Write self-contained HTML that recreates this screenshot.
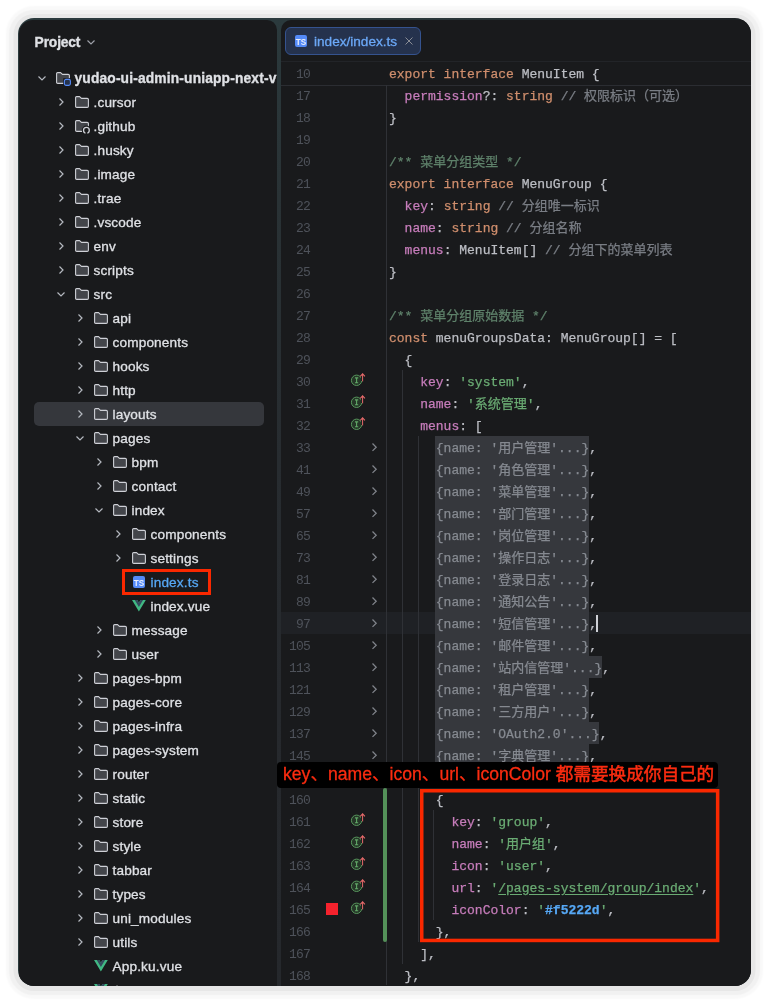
<!DOCTYPE html>
<html><head><meta charset="utf-8"><title>index.ts</title>
<style>
html,body{margin:0;padding:0;background:#fff;}
body{width:769px;height:1004px;position:relative;overflow:hidden;font-family:"Liberation Sans","Noto Sans CJK SC",sans-serif;}
.win{position:absolute;left:18px;top:18px;width:733px;height:968px;border-radius:16px;background:linear-gradient(to right,#2b3a3d 0,#2b3a3d 45%,#1d2124 100%);overflow:hidden;will-change:transform;}
.halo{position:absolute;left:18px;top:18px;width:733px;height:968px;border-radius:16px;box-shadow:0 0.5px 0 4.5px #e7e7e7,0 0.5px 1px 8.5px #f1f1f1,0 0.8px 2px 12px #f9f9f9;}
.side{position:absolute;left:1px;top:2px;width:258px;height:980px;background:#191a1c;border-radius:14px 10px 0 0;overflow:hidden;}
.div{position:absolute;left:259px;top:0;width:4px;height:980px;background:linear-gradient(#2b3a3d 0,#2a373a 60px,#293235 180px,#272c30 440px,#26292d 680px,#25282c 100%);}
.ed{position:absolute;left:263px;top:2px;width:470px;height:980px;background:#191a1c;border-radius:10px 0 0 0;overflow:hidden;}
.row{position:absolute;left:0;height:24px;line-height:24px;font-size:13.6px;letter-spacing:0.16px;color:#dfe1e5;white-space:nowrap;-webkit-text-stroke:0.3px currentColor;}
.row span.t{position:absolute;top:0;}
.sel{position:absolute;left:15px;top:382px;width:229.5px;height:24px;border-radius:5px;background:#35373c;}
svg{position:absolute;overflow:visible;}
.code{position:absolute;left:0;height:22px;line-height:22px;font-family:"Liberation Mono","Noto Sans CJK SC",monospace;font-size:13px;color:#bcbec4;white-space:pre;-webkit-text-stroke:0.25px currentColor;}
.ln{position:absolute;width:60px;text-align:right;left:-30px;height:22px;line-height:22px;font-family:"Liberation Mono",monospace;font-size:13px;letter-spacing:-0.7px;color:#4e525a;}
.k{color:#cf8e6d}.p{color:#c77dbb}.s{color:#6aab73}.c{color:#7a7e85}.d{color:#5f826b}.b{color:#56a8f5}
.f{color:#868a91;}
.fb{position:absolute;height:22px;background:#36383d;}
.u{text-decoration:underline;text-decoration-color:#6aab73;text-underline-offset:2px;}
</style></head><body>
<div class="halo"></div>
<div class="win">

<div class="side">
<div class="row" style="top:10.5px;left:15.6px;font-weight:bold;font-size:13.8px;letter-spacing:-0.15px;"><span class="t" style="left:0">Project</span></div>
<svg style="left:68.2px;top:20.2px" width="8" height="5" viewBox="0 0 8 5"><path d="M0.5 0.5 L4 4 L7.5 0.5" fill="none" stroke="#9da0a8" stroke-width="1.2"/></svg>
<div class="sel"></div>
<svg style="left:19.200000000000003px;top:56.4px" width="8" height="5" viewBox="0 0 8 5"><path d="M0.5 0.5 L4 4 L7.5 0.5" fill="none" stroke="#b4b8bf" stroke-width="1.2"/></svg>
<svg style="left:37px;top:52px" width="14" height="12" viewBox="0 0 14 12"><path d="M1.6 0.6 H4.6 L6.4 2.4 H12.2 Q13.4 2.4 13.4 3.6 V10.2 Q13.4 11.4 12.2 11.4 H1.8 Q0.6 11.4 0.6 10.2 V1.6 Q0.6 0.6 1.6 0.6 Z" fill="#43454a" stroke="#ced0d6" stroke-width="1.1" stroke-linejoin="round"/><rect x="7.2" y="6.2" width="7.6" height="7.6" fill="#191a1c"/><rect x="8.4" y="7.4" width="6" height="6" rx="1.6" fill="#25324d" stroke="#548af7" stroke-width="1.1"/></svg>
<div class="row" style="top:47px;"><span class="t" style="left:55.5px;font-weight:bold;font-size:13.8px;letter-spacing:0.15px;">yudao-ui-admin-uniapp-next-v</span></div>
<svg style="left:39.7px;top:78.4px" width="5" height="8" viewBox="0 0 5 8"><path d="M0.5 0.5 L4 4 L0.5 7.5" fill="none" stroke="#b4b8bf" stroke-width="1.2"/></svg>
<svg style="left:56px;top:76px" width="14" height="12" viewBox="0 0 14 12"><path d="M1.6 0.6 H4.6 L6.4 2.4 H12.2 Q13.4 2.4 13.4 3.6 V10.2 Q13.4 11.4 12.2 11.4 H1.8 Q0.6 11.4 0.6 10.2 V1.6 Q0.6 0.6 1.6 0.6 Z" fill="#43454a" stroke="#ced0d6" stroke-width="1.1" stroke-linejoin="round"/></svg>
<div class="row" style="top:71px;"><span class="t" style="left:74.5px;">.cursor</span></div>
<svg style="left:39.7px;top:102.4px" width="5" height="8" viewBox="0 0 5 8"><path d="M0.5 0.5 L4 4 L0.5 7.5" fill="none" stroke="#b4b8bf" stroke-width="1.2"/></svg>
<svg style="left:56px;top:100px" width="14" height="12" viewBox="0 0 14 12"><path d="M1.6 0.6 H4.6 L6.4 2.4 H12.2 Q13.4 2.4 13.4 3.6 V10.2 Q13.4 11.4 12.2 11.4 H1.8 Q0.6 11.4 0.6 10.2 V1.6 Q0.6 0.6 1.6 0.6 Z" fill="#43454a" stroke="#ced0d6" stroke-width="1.1" stroke-linejoin="round"/><circle cx="11.4" cy="10.2" r="4.6" fill="#191a1c"/><circle cx="11.4" cy="10.2" r="2.9" fill="none" stroke="#ced0d6" stroke-width="1.3"/><rect x="10.5" y="11.6" width="1.8" height="2.6" fill="#191a1c"/></svg>
<div class="row" style="top:95px;"><span class="t" style="left:74.5px;">.github</span></div>
<svg style="left:39.7px;top:126.4px" width="5" height="8" viewBox="0 0 5 8"><path d="M0.5 0.5 L4 4 L0.5 7.5" fill="none" stroke="#b4b8bf" stroke-width="1.2"/></svg>
<svg style="left:56px;top:124px" width="14" height="12" viewBox="0 0 14 12"><path d="M1.6 0.6 H4.6 L6.4 2.4 H12.2 Q13.4 2.4 13.4 3.6 V10.2 Q13.4 11.4 12.2 11.4 H1.8 Q0.6 11.4 0.6 10.2 V1.6 Q0.6 0.6 1.6 0.6 Z" fill="#43454a" stroke="#ced0d6" stroke-width="1.1" stroke-linejoin="round"/></svg>
<div class="row" style="top:119px;"><span class="t" style="left:74.5px;">.husky</span></div>
<svg style="left:39.7px;top:150.4px" width="5" height="8" viewBox="0 0 5 8"><path d="M0.5 0.5 L4 4 L0.5 7.5" fill="none" stroke="#b4b8bf" stroke-width="1.2"/></svg>
<svg style="left:56px;top:148px" width="14" height="12" viewBox="0 0 14 12"><path d="M1.6 0.6 H4.6 L6.4 2.4 H12.2 Q13.4 2.4 13.4 3.6 V10.2 Q13.4 11.4 12.2 11.4 H1.8 Q0.6 11.4 0.6 10.2 V1.6 Q0.6 0.6 1.6 0.6 Z" fill="#43454a" stroke="#ced0d6" stroke-width="1.1" stroke-linejoin="round"/></svg>
<div class="row" style="top:143px;"><span class="t" style="left:74.5px;">.image</span></div>
<svg style="left:39.7px;top:174.4px" width="5" height="8" viewBox="0 0 5 8"><path d="M0.5 0.5 L4 4 L0.5 7.5" fill="none" stroke="#b4b8bf" stroke-width="1.2"/></svg>
<svg style="left:56px;top:172px" width="14" height="12" viewBox="0 0 14 12"><path d="M1.6 0.6 H4.6 L6.4 2.4 H12.2 Q13.4 2.4 13.4 3.6 V10.2 Q13.4 11.4 12.2 11.4 H1.8 Q0.6 11.4 0.6 10.2 V1.6 Q0.6 0.6 1.6 0.6 Z" fill="#43454a" stroke="#ced0d6" stroke-width="1.1" stroke-linejoin="round"/></svg>
<div class="row" style="top:167px;"><span class="t" style="left:74.5px;">.trae</span></div>
<svg style="left:39.7px;top:198.4px" width="5" height="8" viewBox="0 0 5 8"><path d="M0.5 0.5 L4 4 L0.5 7.5" fill="none" stroke="#b4b8bf" stroke-width="1.2"/></svg>
<svg style="left:56px;top:196px" width="14" height="12" viewBox="0 0 14 12"><path d="M1.6 0.6 H4.6 L6.4 2.4 H12.2 Q13.4 2.4 13.4 3.6 V10.2 Q13.4 11.4 12.2 11.4 H1.8 Q0.6 11.4 0.6 10.2 V1.6 Q0.6 0.6 1.6 0.6 Z" fill="#43454a" stroke="#ced0d6" stroke-width="1.1" stroke-linejoin="round"/></svg>
<div class="row" style="top:191px;"><span class="t" style="left:74.5px;">.vscode</span></div>
<svg style="left:39.7px;top:222.4px" width="5" height="8" viewBox="0 0 5 8"><path d="M0.5 0.5 L4 4 L0.5 7.5" fill="none" stroke="#b4b8bf" stroke-width="1.2"/></svg>
<svg style="left:56px;top:220px" width="14" height="12" viewBox="0 0 14 12"><path d="M1.6 0.6 H4.6 L6.4 2.4 H12.2 Q13.4 2.4 13.4 3.6 V10.2 Q13.4 11.4 12.2 11.4 H1.8 Q0.6 11.4 0.6 10.2 V1.6 Q0.6 0.6 1.6 0.6 Z" fill="#43454a" stroke="#ced0d6" stroke-width="1.1" stroke-linejoin="round"/></svg>
<div class="row" style="top:215px;"><span class="t" style="left:74.5px;">env</span></div>
<svg style="left:39.7px;top:246.4px" width="5" height="8" viewBox="0 0 5 8"><path d="M0.5 0.5 L4 4 L0.5 7.5" fill="none" stroke="#b4b8bf" stroke-width="1.2"/></svg>
<svg style="left:56px;top:244px" width="14" height="12" viewBox="0 0 14 12"><path d="M1.6 0.6 H4.6 L6.4 2.4 H12.2 Q13.4 2.4 13.4 3.6 V10.2 Q13.4 11.4 12.2 11.4 H1.8 Q0.6 11.4 0.6 10.2 V1.6 Q0.6 0.6 1.6 0.6 Z" fill="#43454a" stroke="#ced0d6" stroke-width="1.1" stroke-linejoin="round"/></svg>
<div class="row" style="top:239px;"><span class="t" style="left:74.5px;">scripts</span></div>
<svg style="left:38.2px;top:272.4px" width="8" height="5" viewBox="0 0 8 5"><path d="M0.5 0.5 L4 4 L7.5 0.5" fill="none" stroke="#b4b8bf" stroke-width="1.2"/></svg>
<svg style="left:56px;top:268px" width="14" height="12" viewBox="0 0 14 12"><path d="M1.6 0.6 H4.6 L6.4 2.4 H12.2 Q13.4 2.4 13.4 3.6 V10.2 Q13.4 11.4 12.2 11.4 H1.8 Q0.6 11.4 0.6 10.2 V1.6 Q0.6 0.6 1.6 0.6 Z" fill="#43454a" stroke="#ced0d6" stroke-width="1.1" stroke-linejoin="round"/></svg>
<div class="row" style="top:263px;"><span class="t" style="left:74.5px;">src</span></div>
<svg style="left:58.7px;top:294.4px" width="5" height="8" viewBox="0 0 5 8"><path d="M0.5 0.5 L4 4 L0.5 7.5" fill="none" stroke="#b4b8bf" stroke-width="1.2"/></svg>
<svg style="left:75px;top:292px" width="14" height="12" viewBox="0 0 14 12"><path d="M1.6 0.6 H4.6 L6.4 2.4 H12.2 Q13.4 2.4 13.4 3.6 V10.2 Q13.4 11.4 12.2 11.4 H1.8 Q0.6 11.4 0.6 10.2 V1.6 Q0.6 0.6 1.6 0.6 Z" fill="#43454a" stroke="#ced0d6" stroke-width="1.1" stroke-linejoin="round"/></svg>
<div class="row" style="top:287px;"><span class="t" style="left:93.5px;">api</span></div>
<svg style="left:58.7px;top:318.4px" width="5" height="8" viewBox="0 0 5 8"><path d="M0.5 0.5 L4 4 L0.5 7.5" fill="none" stroke="#b4b8bf" stroke-width="1.2"/></svg>
<svg style="left:75px;top:316px" width="14" height="12" viewBox="0 0 14 12"><path d="M1.6 0.6 H4.6 L6.4 2.4 H12.2 Q13.4 2.4 13.4 3.6 V10.2 Q13.4 11.4 12.2 11.4 H1.8 Q0.6 11.4 0.6 10.2 V1.6 Q0.6 0.6 1.6 0.6 Z" fill="#43454a" stroke="#ced0d6" stroke-width="1.1" stroke-linejoin="round"/></svg>
<div class="row" style="top:311px;"><span class="t" style="left:93.5px;">components</span></div>
<svg style="left:58.7px;top:342.4px" width="5" height="8" viewBox="0 0 5 8"><path d="M0.5 0.5 L4 4 L0.5 7.5" fill="none" stroke="#b4b8bf" stroke-width="1.2"/></svg>
<svg style="left:75px;top:340px" width="14" height="12" viewBox="0 0 14 12"><path d="M1.6 0.6 H4.6 L6.4 2.4 H12.2 Q13.4 2.4 13.4 3.6 V10.2 Q13.4 11.4 12.2 11.4 H1.8 Q0.6 11.4 0.6 10.2 V1.6 Q0.6 0.6 1.6 0.6 Z" fill="#43454a" stroke="#ced0d6" stroke-width="1.1" stroke-linejoin="round"/></svg>
<div class="row" style="top:335px;"><span class="t" style="left:93.5px;">hooks</span></div>
<svg style="left:58.7px;top:366.4px" width="5" height="8" viewBox="0 0 5 8"><path d="M0.5 0.5 L4 4 L0.5 7.5" fill="none" stroke="#b4b8bf" stroke-width="1.2"/></svg>
<svg style="left:75px;top:364px" width="14" height="12" viewBox="0 0 14 12"><path d="M1.6 0.6 H4.6 L6.4 2.4 H12.2 Q13.4 2.4 13.4 3.6 V10.2 Q13.4 11.4 12.2 11.4 H1.8 Q0.6 11.4 0.6 10.2 V1.6 Q0.6 0.6 1.6 0.6 Z" fill="#43454a" stroke="#ced0d6" stroke-width="1.1" stroke-linejoin="round"/></svg>
<div class="row" style="top:359px;"><span class="t" style="left:93.5px;">http</span></div>
<svg style="left:58.7px;top:390.4px" width="5" height="8" viewBox="0 0 5 8"><path d="M0.5 0.5 L4 4 L0.5 7.5" fill="none" stroke="#b4b8bf" stroke-width="1.2"/></svg>
<svg style="left:75px;top:388px" width="14" height="12" viewBox="0 0 14 12"><path d="M1.6 0.6 H4.6 L6.4 2.4 H12.2 Q13.4 2.4 13.4 3.6 V10.2 Q13.4 11.4 12.2 11.4 H1.8 Q0.6 11.4 0.6 10.2 V1.6 Q0.6 0.6 1.6 0.6 Z" fill="#43454a" stroke="#ced0d6" stroke-width="1.1" stroke-linejoin="round"/></svg>
<div class="row" style="top:383px;"><span class="t" style="left:93.5px;">layouts</span></div>
<svg style="left:57.2px;top:416.4px" width="8" height="5" viewBox="0 0 8 5"><path d="M0.5 0.5 L4 4 L7.5 0.5" fill="none" stroke="#b4b8bf" stroke-width="1.2"/></svg>
<svg style="left:75px;top:412px" width="14" height="12" viewBox="0 0 14 12"><path d="M1.6 0.6 H4.6 L6.4 2.4 H12.2 Q13.4 2.4 13.4 3.6 V10.2 Q13.4 11.4 12.2 11.4 H1.8 Q0.6 11.4 0.6 10.2 V1.6 Q0.6 0.6 1.6 0.6 Z" fill="#43454a" stroke="#ced0d6" stroke-width="1.1" stroke-linejoin="round"/></svg>
<div class="row" style="top:407px;"><span class="t" style="left:93.5px;">pages</span></div>
<svg style="left:77.7px;top:438.4px" width="5" height="8" viewBox="0 0 5 8"><path d="M0.5 0.5 L4 4 L0.5 7.5" fill="none" stroke="#b4b8bf" stroke-width="1.2"/></svg>
<svg style="left:94px;top:436px" width="14" height="12" viewBox="0 0 14 12"><path d="M1.6 0.6 H4.6 L6.4 2.4 H12.2 Q13.4 2.4 13.4 3.6 V10.2 Q13.4 11.4 12.2 11.4 H1.8 Q0.6 11.4 0.6 10.2 V1.6 Q0.6 0.6 1.6 0.6 Z" fill="#43454a" stroke="#ced0d6" stroke-width="1.1" stroke-linejoin="round"/></svg>
<div class="row" style="top:431px;"><span class="t" style="left:112.5px;">bpm</span></div>
<svg style="left:77.7px;top:462.4px" width="5" height="8" viewBox="0 0 5 8"><path d="M0.5 0.5 L4 4 L0.5 7.5" fill="none" stroke="#b4b8bf" stroke-width="1.2"/></svg>
<svg style="left:94px;top:460px" width="14" height="12" viewBox="0 0 14 12"><path d="M1.6 0.6 H4.6 L6.4 2.4 H12.2 Q13.4 2.4 13.4 3.6 V10.2 Q13.4 11.4 12.2 11.4 H1.8 Q0.6 11.4 0.6 10.2 V1.6 Q0.6 0.6 1.6 0.6 Z" fill="#43454a" stroke="#ced0d6" stroke-width="1.1" stroke-linejoin="round"/></svg>
<div class="row" style="top:455px;"><span class="t" style="left:112.5px;">contact</span></div>
<svg style="left:76.2px;top:488.4px" width="8" height="5" viewBox="0 0 8 5"><path d="M0.5 0.5 L4 4 L7.5 0.5" fill="none" stroke="#b4b8bf" stroke-width="1.2"/></svg>
<svg style="left:94px;top:484px" width="14" height="12" viewBox="0 0 14 12"><path d="M1.6 0.6 H4.6 L6.4 2.4 H12.2 Q13.4 2.4 13.4 3.6 V10.2 Q13.4 11.4 12.2 11.4 H1.8 Q0.6 11.4 0.6 10.2 V1.6 Q0.6 0.6 1.6 0.6 Z" fill="#43454a" stroke="#ced0d6" stroke-width="1.1" stroke-linejoin="round"/></svg>
<div class="row" style="top:479px;"><span class="t" style="left:112.5px;">index</span></div>
<svg style="left:96.7px;top:510.4px" width="5" height="8" viewBox="0 0 5 8"><path d="M0.5 0.5 L4 4 L0.5 7.5" fill="none" stroke="#b4b8bf" stroke-width="1.2"/></svg>
<svg style="left:113px;top:508px" width="14" height="12" viewBox="0 0 14 12"><path d="M1.6 0.6 H4.6 L6.4 2.4 H12.2 Q13.4 2.4 13.4 3.6 V10.2 Q13.4 11.4 12.2 11.4 H1.8 Q0.6 11.4 0.6 10.2 V1.6 Q0.6 0.6 1.6 0.6 Z" fill="#43454a" stroke="#ced0d6" stroke-width="1.1" stroke-linejoin="round"/></svg>
<div class="row" style="top:503px;"><span class="t" style="left:131.5px;">components</span></div>
<svg style="left:96.7px;top:534.4px" width="5" height="8" viewBox="0 0 5 8"><path d="M0.5 0.5 L4 4 L0.5 7.5" fill="none" stroke="#b4b8bf" stroke-width="1.2"/></svg>
<svg style="left:113px;top:532px" width="14" height="12" viewBox="0 0 14 12"><path d="M1.6 0.6 H4.6 L6.4 2.4 H12.2 Q13.4 2.4 13.4 3.6 V10.2 Q13.4 11.4 12.2 11.4 H1.8 Q0.6 11.4 0.6 10.2 V1.6 Q0.6 0.6 1.6 0.6 Z" fill="#43454a" stroke="#ced0d6" stroke-width="1.1" stroke-linejoin="round"/></svg>
<div class="row" style="top:527px;"><span class="t" style="left:131.5px;">settings</span></div>
<svg style="left:114px;top:556px" width="12" height="12" viewBox="0 0 12 12"><rect width="12" height="12" rx="2" fill="#548af7"/><text x="6" y="9.5" font-family="Liberation Sans,sans-serif" font-size="8.2" font-weight="bold" fill="#e8eefc" text-anchor="middle">TS</text></svg>
<div class="row" style="top:551px;"><span class="t" style="left:131.5px;color:#56a8f5;">index.ts</span></div>
<svg style="left:113.3px;top:580px" width="13.8" height="11.6" viewBox="0 0 13.8 11.95" preserveAspectRatio="none"><path d="M8.49 0 L6.9 2.76 L5.3 0 H0 L6.9 11.95 L13.8 0 Z" fill="#41b883"/><path d="M8.49 0 L6.9 2.76 L5.3 0 H2.76 L6.9 7.17 L11.04 0 Z" fill="#35495e"/></svg>
<div class="row" style="top:575px;"><span class="t" style="left:131.5px;">index.vue</span></div>
<svg style="left:77.7px;top:606.4px" width="5" height="8" viewBox="0 0 5 8"><path d="M0.5 0.5 L4 4 L0.5 7.5" fill="none" stroke="#b4b8bf" stroke-width="1.2"/></svg>
<svg style="left:94px;top:604px" width="14" height="12" viewBox="0 0 14 12"><path d="M1.6 0.6 H4.6 L6.4 2.4 H12.2 Q13.4 2.4 13.4 3.6 V10.2 Q13.4 11.4 12.2 11.4 H1.8 Q0.6 11.4 0.6 10.2 V1.6 Q0.6 0.6 1.6 0.6 Z" fill="#43454a" stroke="#ced0d6" stroke-width="1.1" stroke-linejoin="round"/></svg>
<div class="row" style="top:599px;"><span class="t" style="left:112.5px;">message</span></div>
<svg style="left:77.7px;top:630.4px" width="5" height="8" viewBox="0 0 5 8"><path d="M0.5 0.5 L4 4 L0.5 7.5" fill="none" stroke="#b4b8bf" stroke-width="1.2"/></svg>
<svg style="left:94px;top:628px" width="14" height="12" viewBox="0 0 14 12"><path d="M1.6 0.6 H4.6 L6.4 2.4 H12.2 Q13.4 2.4 13.4 3.6 V10.2 Q13.4 11.4 12.2 11.4 H1.8 Q0.6 11.4 0.6 10.2 V1.6 Q0.6 0.6 1.6 0.6 Z" fill="#43454a" stroke="#ced0d6" stroke-width="1.1" stroke-linejoin="round"/></svg>
<div class="row" style="top:623px;"><span class="t" style="left:112.5px;">user</span></div>
<svg style="left:58.7px;top:654.4px" width="5" height="8" viewBox="0 0 5 8"><path d="M0.5 0.5 L4 4 L0.5 7.5" fill="none" stroke="#b4b8bf" stroke-width="1.2"/></svg>
<svg style="left:75px;top:652px" width="14" height="12" viewBox="0 0 14 12"><path d="M1.6 0.6 H4.6 L6.4 2.4 H12.2 Q13.4 2.4 13.4 3.6 V10.2 Q13.4 11.4 12.2 11.4 H1.8 Q0.6 11.4 0.6 10.2 V1.6 Q0.6 0.6 1.6 0.6 Z" fill="#43454a" stroke="#ced0d6" stroke-width="1.1" stroke-linejoin="round"/></svg>
<div class="row" style="top:647px;"><span class="t" style="left:93.5px;">pages-bpm</span></div>
<svg style="left:58.7px;top:678.4px" width="5" height="8" viewBox="0 0 5 8"><path d="M0.5 0.5 L4 4 L0.5 7.5" fill="none" stroke="#b4b8bf" stroke-width="1.2"/></svg>
<svg style="left:75px;top:676px" width="14" height="12" viewBox="0 0 14 12"><path d="M1.6 0.6 H4.6 L6.4 2.4 H12.2 Q13.4 2.4 13.4 3.6 V10.2 Q13.4 11.4 12.2 11.4 H1.8 Q0.6 11.4 0.6 10.2 V1.6 Q0.6 0.6 1.6 0.6 Z" fill="#43454a" stroke="#ced0d6" stroke-width="1.1" stroke-linejoin="round"/></svg>
<div class="row" style="top:671px;"><span class="t" style="left:93.5px;">pages-core</span></div>
<svg style="left:58.7px;top:702.4px" width="5" height="8" viewBox="0 0 5 8"><path d="M0.5 0.5 L4 4 L0.5 7.5" fill="none" stroke="#b4b8bf" stroke-width="1.2"/></svg>
<svg style="left:75px;top:700px" width="14" height="12" viewBox="0 0 14 12"><path d="M1.6 0.6 H4.6 L6.4 2.4 H12.2 Q13.4 2.4 13.4 3.6 V10.2 Q13.4 11.4 12.2 11.4 H1.8 Q0.6 11.4 0.6 10.2 V1.6 Q0.6 0.6 1.6 0.6 Z" fill="#43454a" stroke="#ced0d6" stroke-width="1.1" stroke-linejoin="round"/></svg>
<div class="row" style="top:695px;"><span class="t" style="left:93.5px;">pages-infra</span></div>
<svg style="left:58.7px;top:726.4px" width="5" height="8" viewBox="0 0 5 8"><path d="M0.5 0.5 L4 4 L0.5 7.5" fill="none" stroke="#b4b8bf" stroke-width="1.2"/></svg>
<svg style="left:75px;top:724px" width="14" height="12" viewBox="0 0 14 12"><path d="M1.6 0.6 H4.6 L6.4 2.4 H12.2 Q13.4 2.4 13.4 3.6 V10.2 Q13.4 11.4 12.2 11.4 H1.8 Q0.6 11.4 0.6 10.2 V1.6 Q0.6 0.6 1.6 0.6 Z" fill="#43454a" stroke="#ced0d6" stroke-width="1.1" stroke-linejoin="round"/></svg>
<div class="row" style="top:719px;"><span class="t" style="left:93.5px;">pages-system</span></div>
<svg style="left:58.7px;top:750.4px" width="5" height="8" viewBox="0 0 5 8"><path d="M0.5 0.5 L4 4 L0.5 7.5" fill="none" stroke="#b4b8bf" stroke-width="1.2"/></svg>
<svg style="left:75px;top:748px" width="14" height="12" viewBox="0 0 14 12"><path d="M1.6 0.6 H4.6 L6.4 2.4 H12.2 Q13.4 2.4 13.4 3.6 V10.2 Q13.4 11.4 12.2 11.4 H1.8 Q0.6 11.4 0.6 10.2 V1.6 Q0.6 0.6 1.6 0.6 Z" fill="#43454a" stroke="#ced0d6" stroke-width="1.1" stroke-linejoin="round"/></svg>
<div class="row" style="top:743px;"><span class="t" style="left:93.5px;">router</span></div>
<svg style="left:58.7px;top:774.4px" width="5" height="8" viewBox="0 0 5 8"><path d="M0.5 0.5 L4 4 L0.5 7.5" fill="none" stroke="#b4b8bf" stroke-width="1.2"/></svg>
<svg style="left:75px;top:772px" width="14" height="12" viewBox="0 0 14 12"><path d="M1.6 0.6 H4.6 L6.4 2.4 H12.2 Q13.4 2.4 13.4 3.6 V10.2 Q13.4 11.4 12.2 11.4 H1.8 Q0.6 11.4 0.6 10.2 V1.6 Q0.6 0.6 1.6 0.6 Z" fill="#43454a" stroke="#ced0d6" stroke-width="1.1" stroke-linejoin="round"/></svg>
<div class="row" style="top:767px;"><span class="t" style="left:93.5px;">static</span></div>
<svg style="left:58.7px;top:798.4px" width="5" height="8" viewBox="0 0 5 8"><path d="M0.5 0.5 L4 4 L0.5 7.5" fill="none" stroke="#b4b8bf" stroke-width="1.2"/></svg>
<svg style="left:75px;top:796px" width="14" height="12" viewBox="0 0 14 12"><path d="M1.6 0.6 H4.6 L6.4 2.4 H12.2 Q13.4 2.4 13.4 3.6 V10.2 Q13.4 11.4 12.2 11.4 H1.8 Q0.6 11.4 0.6 10.2 V1.6 Q0.6 0.6 1.6 0.6 Z" fill="#43454a" stroke="#ced0d6" stroke-width="1.1" stroke-linejoin="round"/></svg>
<div class="row" style="top:791px;"><span class="t" style="left:93.5px;">store</span></div>
<svg style="left:58.7px;top:822.4px" width="5" height="8" viewBox="0 0 5 8"><path d="M0.5 0.5 L4 4 L0.5 7.5" fill="none" stroke="#b4b8bf" stroke-width="1.2"/></svg>
<svg style="left:75px;top:820px" width="14" height="12" viewBox="0 0 14 12"><path d="M1.6 0.6 H4.6 L6.4 2.4 H12.2 Q13.4 2.4 13.4 3.6 V10.2 Q13.4 11.4 12.2 11.4 H1.8 Q0.6 11.4 0.6 10.2 V1.6 Q0.6 0.6 1.6 0.6 Z" fill="#43454a" stroke="#ced0d6" stroke-width="1.1" stroke-linejoin="round"/></svg>
<div class="row" style="top:815px;"><span class="t" style="left:93.5px;">style</span></div>
<svg style="left:58.7px;top:846.4px" width="5" height="8" viewBox="0 0 5 8"><path d="M0.5 0.5 L4 4 L0.5 7.5" fill="none" stroke="#b4b8bf" stroke-width="1.2"/></svg>
<svg style="left:75px;top:844px" width="14" height="12" viewBox="0 0 14 12"><path d="M1.6 0.6 H4.6 L6.4 2.4 H12.2 Q13.4 2.4 13.4 3.6 V10.2 Q13.4 11.4 12.2 11.4 H1.8 Q0.6 11.4 0.6 10.2 V1.6 Q0.6 0.6 1.6 0.6 Z" fill="#43454a" stroke="#ced0d6" stroke-width="1.1" stroke-linejoin="round"/></svg>
<div class="row" style="top:839px;"><span class="t" style="left:93.5px;">tabbar</span></div>
<svg style="left:58.7px;top:870.4px" width="5" height="8" viewBox="0 0 5 8"><path d="M0.5 0.5 L4 4 L0.5 7.5" fill="none" stroke="#b4b8bf" stroke-width="1.2"/></svg>
<svg style="left:75px;top:868px" width="14" height="12" viewBox="0 0 14 12"><path d="M1.6 0.6 H4.6 L6.4 2.4 H12.2 Q13.4 2.4 13.4 3.6 V10.2 Q13.4 11.4 12.2 11.4 H1.8 Q0.6 11.4 0.6 10.2 V1.6 Q0.6 0.6 1.6 0.6 Z" fill="#43454a" stroke="#ced0d6" stroke-width="1.1" stroke-linejoin="round"/></svg>
<div class="row" style="top:863px;"><span class="t" style="left:93.5px;">types</span></div>
<svg style="left:58.7px;top:894.4px" width="5" height="8" viewBox="0 0 5 8"><path d="M0.5 0.5 L4 4 L0.5 7.5" fill="none" stroke="#b4b8bf" stroke-width="1.2"/></svg>
<svg style="left:75px;top:892px" width="14" height="12" viewBox="0 0 14 12"><path d="M1.6 0.6 H4.6 L6.4 2.4 H12.2 Q13.4 2.4 13.4 3.6 V10.2 Q13.4 11.4 12.2 11.4 H1.8 Q0.6 11.4 0.6 10.2 V1.6 Q0.6 0.6 1.6 0.6 Z" fill="#43454a" stroke="#ced0d6" stroke-width="1.1" stroke-linejoin="round"/></svg>
<div class="row" style="top:887px;"><span class="t" style="left:93.5px;">uni_modules</span></div>
<svg style="left:58.7px;top:918.4px" width="5" height="8" viewBox="0 0 5 8"><path d="M0.5 0.5 L4 4 L0.5 7.5" fill="none" stroke="#b4b8bf" stroke-width="1.2"/></svg>
<svg style="left:75px;top:916px" width="14" height="12" viewBox="0 0 14 12"><path d="M1.6 0.6 H4.6 L6.4 2.4 H12.2 Q13.4 2.4 13.4 3.6 V10.2 Q13.4 11.4 12.2 11.4 H1.8 Q0.6 11.4 0.6 10.2 V1.6 Q0.6 0.6 1.6 0.6 Z" fill="#43454a" stroke="#ced0d6" stroke-width="1.1" stroke-linejoin="round"/></svg>
<div class="row" style="top:911px;"><span class="t" style="left:93.5px;">utils</span></div>
<svg style="left:75.3px;top:940px" width="13.8" height="11.6" viewBox="0 0 13.8 11.95" preserveAspectRatio="none"><path d="M8.49 0 L6.9 2.76 L5.3 0 H0 L6.9 11.95 L13.8 0 Z" fill="#41b883"/><path d="M8.49 0 L6.9 2.76 L5.3 0 H2.76 L6.9 7.17 L11.04 0 Z" fill="#35495e"/></svg>
<div class="row" style="top:935px;"><span class="t" style="left:93.5px;">App.ku.vue</span></div>
<svg style="left:75.3px;top:964px" width="13.8" height="11.6" viewBox="0 0 13.8 11.95" preserveAspectRatio="none"><path d="M8.49 0 L6.9 2.76 L5.3 0 H0 L6.9 11.95 L13.8 0 Z" fill="#41b883"/><path d="M8.49 0 L6.9 2.76 L5.3 0 H2.76 L6.9 7.17 L11.04 0 Z" fill="#35495e"/></svg>
<div class="row" style="top:959px;"><span class="t" style="left:93.5px;">App.vue</span></div>
<div style="position:absolute;left:103px;top:548.7px;width:82.69999999999999px;height:20.299999999999955px;border:3px solid #fa2800;"></div>
</div>
<div class="div"></div>
<div class="ed">
<div style="position:absolute;left:4px;top:7px;width:134px;height:26px;border:1px solid #35538f;border-radius:6px;background:#25324d;"></div>
<svg style="left:14px;top:15px" width="12" height="12" viewBox="0 0 12 12"><rect width="12" height="12" rx="2" fill="#548af7"/><text x="6" y="9.5" font-family="Liberation Sans,sans-serif" font-size="8.2" font-weight="bold" fill="#e8eefc" text-anchor="middle">TS</text></svg>
<div style="position:absolute;left:33px;top:10px;height:24px;line-height:24px;font-size:13.6px;letter-spacing:0;color:#6ba8f7;white-space:nowrap;-webkit-text-stroke:0.3px #6ba8f7;">index/index.ts</div>
<svg style="left:123.5px;top:17px" width="8" height="8" viewBox="0 0 8 8"><path d="M0.5 0.5 L7.5 7.5 M7.5 0.5 L0.5 7.5" stroke="#8a8d95" stroke-width="1" fill="none"/></svg>
<div style="position:absolute;left:0;top:40.5px;width:470px;height:1px;background:#222428;"></div>
<div style="position:absolute;left:0;top:64.6px;width:470px;height:1px;background:#2b2d32;"></div>
<div style="position:absolute;left:0;top:592px;width:470px;height:22px;background:#1f2125;"></div>
<div style="position:absolute;left:105px;top:65px;width:1px;height:900px;background:#2f3136;"></div>
<div style="position:absolute;left:121px;top:350px;width:1px;height:594px;background:#2f3136;"></div>
<div style="position:absolute;left:137px;top:416px;width:1px;height:506px;background:#2f3136;"></div>
<div style="position:absolute;left:152px;top:790px;width:1px;height:110px;background:#2f3136;"></div>
<div style="position:absolute;left:102px;top:768px;width:3.7px;height:154px;background:#549159;border-radius:2px;"></div>
<div class="ln" style="top:44.0px;left:-30.80000000000001px">10</div>
<div class="code" style="top:43.5px;left:108px"><span class="k">export interface</span> MenuItem {</div>
<div class="ln" style="top:66.0px;left:-30.80000000000001px">17</div>
<div class="code" style="top:65.5px;left:108px">  <span class="p">permission</span>?: <span class="k">string</span> <span class="c">// 权限标识（可选）</span></div>
<div class="ln" style="top:88.0px;left:-30.80000000000001px">18</div>
<div class="code" style="top:87.5px;left:108px">}</div>
<div class="ln" style="top:110.0px;left:-30.80000000000001px">19</div>
<div class="code" style="top:109.5px;left:108px"></div>
<div class="ln" style="top:132.0px;left:-30.80000000000001px">20</div>
<div class="code" style="top:131.5px;left:108px"><span class="d">/** 菜单分组类型 */</span></div>
<div class="ln" style="top:154.0px;left:-30.80000000000001px">21</div>
<div class="code" style="top:153.5px;left:108px"><span class="k">export interface</span> MenuGroup {</div>
<div class="ln" style="top:176.0px;left:-30.80000000000001px">22</div>
<div class="code" style="top:175.5px;left:108px">  <span class="p">key</span>: <span class="k">string</span> <span class="c">// 分组唯一标识</span></div>
<div class="ln" style="top:198.0px;left:-30.80000000000001px">23</div>
<div class="code" style="top:197.5px;left:108px">  <span class="p">name</span>: <span class="k">string</span> <span class="c">// 分组名称</span></div>
<div class="ln" style="top:220.0px;left:-30.80000000000001px">24</div>
<div class="code" style="top:219.5px;left:108px">  <span class="p">menus</span>: MenuItem[] <span class="c">// 分组下的菜单列表</span></div>
<div class="ln" style="top:242.0px;left:-30.80000000000001px">25</div>
<div class="code" style="top:241.5px;left:108px">}</div>
<div class="ln" style="top:264.0px;left:-30.80000000000001px">26</div>
<div class="code" style="top:263.5px;left:108px"></div>
<div class="ln" style="top:286.0px;left:-30.80000000000001px">27</div>
<div class="code" style="top:285.5px;left:108px"><span class="d">/** 菜单分组原始数据 */</span></div>
<div class="ln" style="top:308.0px;left:-30.80000000000001px">28</div>
<div class="code" style="top:307.5px;left:108px"><span class="k">const</span> menuGroupsData: MenuGroup[] = [</div>
<div class="ln" style="top:330.0px;left:-30.80000000000001px">29</div>
<div class="code" style="top:329.5px;left:108px">  {</div>
<div class="ln" style="top:352.0px;left:-30.80000000000001px">30</div>
<svg style="left:69.89999999999998px;top:352.4px" width="16" height="15" viewBox="0 0 16 15"><circle cx="5.6" cy="8.3" r="5.2" fill="#253627" stroke="#57965c" stroke-width="1"/><path d="M4 5.9 H7.2 M4 10.7 H7.2 M5.6 5.9 V10.7" stroke="#62a868" stroke-width="1.1" fill="none"/><rect x="10.1" y="0" width="3" height="9" fill="#191a1c"/><path d="M11.6 9.4 V1.9" stroke="#e66a6a" stroke-width="1" fill="none"/><path d="M9.3 4.4 L11.6 1.8 L13.9 4.4" stroke="#e66a6a" stroke-width="1.1" fill="none"/></svg>
<div class="code" style="top:351.5px;left:108px">    <span class="p">key</span>: <span class="s">&#x27;system&#x27;</span>,</div>
<div class="ln" style="top:374.0px;left:-30.80000000000001px">31</div>
<svg style="left:69.89999999999998px;top:374.4px" width="16" height="15" viewBox="0 0 16 15"><circle cx="5.6" cy="8.3" r="5.2" fill="#253627" stroke="#57965c" stroke-width="1"/><path d="M4 5.9 H7.2 M4 10.7 H7.2 M5.6 5.9 V10.7" stroke="#62a868" stroke-width="1.1" fill="none"/><rect x="10.1" y="0" width="3" height="9" fill="#191a1c"/><path d="M11.6 9.4 V1.9" stroke="#e66a6a" stroke-width="1" fill="none"/><path d="M9.3 4.4 L11.6 1.8 L13.9 4.4" stroke="#e66a6a" stroke-width="1.1" fill="none"/></svg>
<div class="code" style="top:373.5px;left:108px">    <span class="p">name</span>: <span class="s">&#x27;系统管理&#x27;</span>,</div>
<div class="ln" style="top:396.0px;left:-30.80000000000001px">32</div>
<svg style="left:69.89999999999998px;top:396.4px" width="16" height="15" viewBox="0 0 16 15"><circle cx="5.6" cy="8.3" r="5.2" fill="#253627" stroke="#57965c" stroke-width="1"/><path d="M4 5.9 H7.2 M4 10.7 H7.2 M5.6 5.9 V10.7" stroke="#62a868" stroke-width="1.1" fill="none"/><rect x="10.1" y="0" width="3" height="9" fill="#191a1c"/><path d="M11.6 9.4 V1.9" stroke="#e66a6a" stroke-width="1" fill="none"/><path d="M9.3 4.4 L11.6 1.8 L13.9 4.4" stroke="#e66a6a" stroke-width="1.1" fill="none"/></svg>
<div class="code" style="top:395.5px;left:108px">    <span class="p">menus</span>: [</div>
<div class="ln" style="top:418.0px;left:-30.80000000000001px">33</div>
<svg style="left:90.60000000000002px;top:423.3px" width="5" height="8.4" viewBox="0 0 5 8.4"><path d="M0.5 0.5 L4.2 4.2 L0.5 7.9" fill="none" stroke="#80848b" stroke-width="1.25"/></svg>
<div class="fb" style="left:154.3px;top:416px;width:153.6px"></div>
<div class="code" style="top:417.5px;left:108px">      <span class="f">{name: &#x27;用户管理&#x27;...}</span>,</div>
<div class="ln" style="top:440.0px;left:-30.80000000000001px">41</div>
<svg style="left:90.60000000000002px;top:445.3px" width="5" height="8.4" viewBox="0 0 5 8.4"><path d="M0.5 0.5 L4.2 4.2 L0.5 7.9" fill="none" stroke="#80848b" stroke-width="1.25"/></svg>
<div class="fb" style="left:154.3px;top:438px;width:153.6px"></div>
<div class="code" style="top:439.5px;left:108px">      <span class="f">{name: &#x27;角色管理&#x27;...}</span>,</div>
<div class="ln" style="top:462.0px;left:-30.80000000000001px">49</div>
<svg style="left:90.60000000000002px;top:467.3px" width="5" height="8.4" viewBox="0 0 5 8.4"><path d="M0.5 0.5 L4.2 4.2 L0.5 7.9" fill="none" stroke="#80848b" stroke-width="1.25"/></svg>
<div class="fb" style="left:154.3px;top:460px;width:153.6px"></div>
<div class="code" style="top:461.5px;left:108px">      <span class="f">{name: &#x27;菜单管理&#x27;...}</span>,</div>
<div class="ln" style="top:484.0px;left:-30.80000000000001px">57</div>
<svg style="left:90.60000000000002px;top:489.3px" width="5" height="8.4" viewBox="0 0 5 8.4"><path d="M0.5 0.5 L4.2 4.2 L0.5 7.9" fill="none" stroke="#80848b" stroke-width="1.25"/></svg>
<div class="fb" style="left:154.3px;top:482px;width:153.6px"></div>
<div class="code" style="top:483.5px;left:108px">      <span class="f">{name: &#x27;部门管理&#x27;...}</span>,</div>
<div class="ln" style="top:506.0px;left:-30.80000000000001px">65</div>
<svg style="left:90.60000000000002px;top:511.3px" width="5" height="8.4" viewBox="0 0 5 8.4"><path d="M0.5 0.5 L4.2 4.2 L0.5 7.9" fill="none" stroke="#80848b" stroke-width="1.25"/></svg>
<div class="fb" style="left:154.3px;top:504px;width:153.6px"></div>
<div class="code" style="top:505.5px;left:108px">      <span class="f">{name: &#x27;岗位管理&#x27;...}</span>,</div>
<div class="ln" style="top:528.0px;left:-30.80000000000001px">73</div>
<svg style="left:90.60000000000002px;top:533.3px" width="5" height="8.4" viewBox="0 0 5 8.4"><path d="M0.5 0.5 L4.2 4.2 L0.5 7.9" fill="none" stroke="#80848b" stroke-width="1.25"/></svg>
<div class="fb" style="left:154.3px;top:526px;width:153.6px"></div>
<div class="code" style="top:527.5px;left:108px">      <span class="f">{name: &#x27;操作日志&#x27;...}</span>,</div>
<div class="ln" style="top:550.0px;left:-30.80000000000001px">81</div>
<svg style="left:90.60000000000002px;top:555.3px" width="5" height="8.4" viewBox="0 0 5 8.4"><path d="M0.5 0.5 L4.2 4.2 L0.5 7.9" fill="none" stroke="#80848b" stroke-width="1.25"/></svg>
<div class="fb" style="left:154.3px;top:548px;width:153.6px"></div>
<div class="code" style="top:549.5px;left:108px">      <span class="f">{name: &#x27;登录日志&#x27;...}</span>,</div>
<div class="ln" style="top:572.0px;left:-30.80000000000001px">89</div>
<svg style="left:90.60000000000002px;top:577.3px" width="5" height="8.4" viewBox="0 0 5 8.4"><path d="M0.5 0.5 L4.2 4.2 L0.5 7.9" fill="none" stroke="#80848b" stroke-width="1.25"/></svg>
<div class="fb" style="left:154.3px;top:570px;width:153.6px"></div>
<div class="code" style="top:571.5px;left:108px">      <span class="f">{name: &#x27;通知公告&#x27;...}</span>,</div>
<div class="ln" style="top:594.0px;left:-30.80000000000001px">97</div>
<svg style="left:90.60000000000002px;top:599.3px" width="5" height="8.4" viewBox="0 0 5 8.4"><path d="M0.5 0.5 L4.2 4.2 L0.5 7.9" fill="none" stroke="#80848b" stroke-width="1.25"/></svg>
<div class="fb" style="left:154.3px;top:592px;width:153.6px"></div>
<div class="code" style="top:593.5px;left:108px">      <span class="f">{name: &#x27;短信管理&#x27;...}</span>,</div>
<div class="ln" style="top:616.0px;left:-30.80000000000001px">105</div>
<svg style="left:90.60000000000002px;top:621.3px" width="5" height="8.4" viewBox="0 0 5 8.4"><path d="M0.5 0.5 L4.2 4.2 L0.5 7.9" fill="none" stroke="#80848b" stroke-width="1.25"/></svg>
<div class="fb" style="left:154.3px;top:614px;width:153.6px"></div>
<div class="code" style="top:615.5px;left:108px">      <span class="f">{name: &#x27;邮件管理&#x27;...}</span>,</div>
<div class="ln" style="top:638.0px;left:-30.80000000000001px">113</div>
<svg style="left:90.60000000000002px;top:643.3px" width="5" height="8.4" viewBox="0 0 5 8.4"><path d="M0.5 0.5 L4.2 4.2 L0.5 7.9" fill="none" stroke="#80848b" stroke-width="1.25"/></svg>
<div class="fb" style="left:154.3px;top:636px;width:166.6px"></div>
<div class="code" style="top:637.5px;left:108px">      <span class="f">{name: &#x27;站内信管理&#x27;...}</span>,</div>
<div class="ln" style="top:660.0px;left:-30.80000000000001px">121</div>
<svg style="left:90.60000000000002px;top:665.3px" width="5" height="8.4" viewBox="0 0 5 8.4"><path d="M0.5 0.5 L4.2 4.2 L0.5 7.9" fill="none" stroke="#80848b" stroke-width="1.25"/></svg>
<div class="fb" style="left:154.3px;top:658px;width:153.6px"></div>
<div class="code" style="top:659.5px;left:108px">      <span class="f">{name: &#x27;租户管理&#x27;...}</span>,</div>
<div class="ln" style="top:682.0px;left:-30.80000000000001px">129</div>
<svg style="left:90.60000000000002px;top:687.3px" width="5" height="8.4" viewBox="0 0 5 8.4"><path d="M0.5 0.5 L4.2 4.2 L0.5 7.9" fill="none" stroke="#80848b" stroke-width="1.25"/></svg>
<div class="fb" style="left:154.3px;top:680px;width:153.6px"></div>
<div class="code" style="top:681.5px;left:108px">      <span class="f">{name: &#x27;三方用户&#x27;...}</span>,</div>
<div class="ln" style="top:704.0px;left:-30.80000000000001px">137</div>
<svg style="left:90.60000000000002px;top:709.3px" width="5" height="8.4" viewBox="0 0 5 8.4"><path d="M0.5 0.5 L4.2 4.2 L0.5 7.9" fill="none" stroke="#80848b" stroke-width="1.25"/></svg>
<div class="fb" style="left:154.3px;top:702px;width:164.0px"></div>
<div class="code" style="top:703.5px;left:108px">      <span class="f">{name: &#x27;OAuth2.0&#x27;...}</span>,</div>
<div class="ln" style="top:726.0px;left:-30.80000000000001px">145</div>
<svg style="left:90.60000000000002px;top:731.3px" width="5" height="8.4" viewBox="0 0 5 8.4"><path d="M0.5 0.5 L4.2 4.2 L0.5 7.9" fill="none" stroke="#80848b" stroke-width="1.25"/></svg>
<div class="fb" style="left:154.3px;top:724px;width:153.6px"></div>
<div class="code" style="top:725.5px;left:108px">      <span class="f">{name: &#x27;字典管理&#x27;...}</span>,</div>
<div class="ln" style="top:770.0px;left:-30.80000000000001px">160</div>
<div class="code" style="top:769.5px;left:108px">      {</div>
<div class="ln" style="top:792.0px;left:-30.80000000000001px">161</div>
<svg style="left:69.89999999999998px;top:792.4px" width="16" height="15" viewBox="0 0 16 15"><circle cx="5.6" cy="8.3" r="5.2" fill="#253627" stroke="#57965c" stroke-width="1"/><path d="M4 5.9 H7.2 M4 10.7 H7.2 M5.6 5.9 V10.7" stroke="#62a868" stroke-width="1.1" fill="none"/><rect x="10.1" y="0" width="3" height="9" fill="#191a1c"/><path d="M11.6 9.4 V1.9" stroke="#e66a6a" stroke-width="1" fill="none"/><path d="M9.3 4.4 L11.6 1.8 L13.9 4.4" stroke="#e66a6a" stroke-width="1.1" fill="none"/></svg>
<div class="code" style="top:791.5px;left:108px">        <span class="p">key</span>: <span class="s">&#x27;group&#x27;</span>,</div>
<div class="ln" style="top:814.0px;left:-30.80000000000001px">162</div>
<svg style="left:69.89999999999998px;top:814.4px" width="16" height="15" viewBox="0 0 16 15"><circle cx="5.6" cy="8.3" r="5.2" fill="#253627" stroke="#57965c" stroke-width="1"/><path d="M4 5.9 H7.2 M4 10.7 H7.2 M5.6 5.9 V10.7" stroke="#62a868" stroke-width="1.1" fill="none"/><rect x="10.1" y="0" width="3" height="9" fill="#191a1c"/><path d="M11.6 9.4 V1.9" stroke="#e66a6a" stroke-width="1" fill="none"/><path d="M9.3 4.4 L11.6 1.8 L13.9 4.4" stroke="#e66a6a" stroke-width="1.1" fill="none"/></svg>
<div class="code" style="top:813.5px;left:108px">        <span class="p">name</span>: <span class="s">&#x27;用户组&#x27;</span>,</div>
<div class="ln" style="top:836.0px;left:-30.80000000000001px">163</div>
<svg style="left:69.89999999999998px;top:836.4px" width="16" height="15" viewBox="0 0 16 15"><circle cx="5.6" cy="8.3" r="5.2" fill="#253627" stroke="#57965c" stroke-width="1"/><path d="M4 5.9 H7.2 M4 10.7 H7.2 M5.6 5.9 V10.7" stroke="#62a868" stroke-width="1.1" fill="none"/><rect x="10.1" y="0" width="3" height="9" fill="#191a1c"/><path d="M11.6 9.4 V1.9" stroke="#e66a6a" stroke-width="1" fill="none"/><path d="M9.3 4.4 L11.6 1.8 L13.9 4.4" stroke="#e66a6a" stroke-width="1.1" fill="none"/></svg>
<div class="code" style="top:835.5px;left:108px">        <span class="p">icon</span>: <span class="s">&#x27;user&#x27;</span>,</div>
<div class="ln" style="top:858.0px;left:-30.80000000000001px">164</div>
<svg style="left:69.89999999999998px;top:858.4px" width="16" height="15" viewBox="0 0 16 15"><circle cx="5.6" cy="8.3" r="5.2" fill="#253627" stroke="#57965c" stroke-width="1"/><path d="M4 5.9 H7.2 M4 10.7 H7.2 M5.6 5.9 V10.7" stroke="#62a868" stroke-width="1.1" fill="none"/><rect x="10.1" y="0" width="3" height="9" fill="#191a1c"/><path d="M11.6 9.4 V1.9" stroke="#e66a6a" stroke-width="1" fill="none"/><path d="M9.3 4.4 L11.6 1.8 L13.9 4.4" stroke="#e66a6a" stroke-width="1.1" fill="none"/></svg>
<div class="code" style="top:857.5px;left:108px">        <span class="p">url</span>: <span class="s">&#x27;</span><span class="s u">/pages-system/group/index</span><span class="s">&#x27;</span>,</div>
<div class="ln" style="top:880.0px;left:-30.80000000000001px">165</div>
<svg style="left:69.89999999999998px;top:880.4px" width="16" height="15" viewBox="0 0 16 15"><circle cx="5.6" cy="8.3" r="5.2" fill="#253627" stroke="#57965c" stroke-width="1"/><path d="M4 5.9 H7.2 M4 10.7 H7.2 M5.6 5.9 V10.7" stroke="#62a868" stroke-width="1.1" fill="none"/><rect x="10.1" y="0" width="3" height="9" fill="#191a1c"/><path d="M11.6 9.4 V1.9" stroke="#e66a6a" stroke-width="1" fill="none"/><path d="M9.3 4.4 L11.6 1.8 L13.9 4.4" stroke="#e66a6a" stroke-width="1.1" fill="none"/></svg>
<div class="code" style="top:879.5px;left:108px">        <span class="p">iconColor</span>: <span class="s">&#x27;</span><b class="b">#f5222d</b><span class="s">&#x27;</span>,</div>
<div class="ln" style="top:902.0px;left:-30.80000000000001px">166</div>
<div class="code" style="top:901.5px;left:108px">      },</div>
<div class="ln" style="top:924.0px;left:-30.80000000000001px">167</div>
<div class="code" style="top:923.5px;left:108px">    ],</div>
<div class="ln" style="top:946.0px;left:-30.80000000000001px">168</div>
<div class="code" style="top:945.5px;left:108px">  },</div>
<div style="position:absolute;left:315.4px;top:594.5px;width:2px;height:17px;background:#ced0d6;"></div>
<div style="position:absolute;left:45px;top:883px;width:12px;height:12px;background:#f5222d;"></div>
<svg style="left:139.2px;top:768.6px" width="299.4" height="153.2"><rect x="1.75" y="1.75" width="295.9" height="149.7" fill="none" stroke="#fa2800" stroke-width="3.5"/></svg>
</div>
<div style="position:absolute;left:259px;top:744px;width:441px;height:26px;border-radius:4px;background:#000;color:#fb2c10;font-size:17.6px;line-height:23px;white-space:nowrap;-webkit-text-stroke:0.3px #fb2c10;"><span style="position:absolute;left:6px;top:0.5px">key、name、icon、url、iconColor <span style="-webkit-text-stroke:0.55px #fb2c10">都需要换成你自己的</span></span></div>
</div></body></html>
